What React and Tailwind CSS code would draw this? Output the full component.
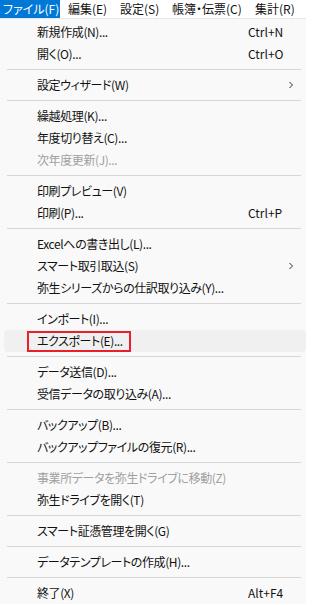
import React from "react";

// メニューバーの項目（幅は参照画像に合わせて固定）
const menubar = [
  { t: "ファイル(F)", w: "w-[60px] pl-[3px]" },
  { t: "編集(E)", w: "w-[52px] pl-[8px]" },
  { t: "設定(S)", w: "w-[52px] pl-[8px]" },
  { t: "帳簿・伝票(C)", w: "w-[83px] pl-[8px]" },
  { t: "集計(R)", w: "w-[59px] pl-[8px]" },
];

// null = 区切り線
const items = [
  { label: "新規作成(N)...", key: "Ctrl+N" },
  { label: "開く(O)...", key: "Ctrl+O" },
  null,
  { label: "設定ウィザード(W)", sub: true },
  null,
  { label: "繰越処理(K)..." },
  { label: "年度切り替え(C)..." },
  { label: "次年度更新(J)...", off: true },
  null,
  { label: "印刷プレビュー(V)" },
  { label: "印刷(P)...", key: "Ctrl+P" },
  null,
  { label: "Excelへの書き出し(L)..." },
  { label: "スマート取引取込(S)", sub: true },
  { label: "弥生シリーズからの仕訳取り込み(Y)..." },
  null,
  { label: "インポート(I)..." },
  { label: "エクスポート(E)...", hot: true },
  null,
  { label: "データ送信(D)..." },
  { label: "受信データの取り込み(A)..." },
  null,
  { label: "バックアップ(B)..." },
  { label: "バックアップファイルの復元(R)..." },
  null,
  { label: "事業所データを弥生ドライブに移動(Z)", off: true },
  { label: "弥生ドライブを開く(T)" },
  null,
  { label: "スマート証憑管理を開く(G)" },
  null,
  { label: "データテンプレートの作成(H)..." },
  null,
  { label: "終了(X)", key: "Alt+F4" },
];

function Chevron() {
  return (
    <svg width="8" height="8" viewBox="0 0 8 8" className="text-[#333]">
      <path d="M2.5 1 L5.5 4 L2.5 7" fill="none" stroke="currentColor" strokeWidth="1" />
    </svg>
  );
}

export default function App() {
  return (
    <div
      className="w-[306px] h-[605px] overflow-hidden bg-white text-[12px] leading-none text-[#111] [font-feature-settings:'palt']"
      style={{ fontFamily: '"Noto Sans CJK JP", "Noto Sans", sans-serif' }}
    >
      {/* メニューバー */}
      <div className="flex h-[18px] items-stretch bg-white whitespace-nowrap">
        {menubar.map((m, i) => (
          <div
            key={m.t}
            className={
              "flex items-center shrink-0 " +
              m.w +
              (i === 0 ? " bg-[#0078d7] text-white" : "")
            }
          >
            {m.t}
          </div>
        ))}
      </div>

      {/* ドロップダウン */}
      <div className="w-[310px] bg-[#f9f9f9] border-t border-[#e8e8e8] pt-[2px] whitespace-nowrap">
        {items.map((it, i) =>
          it === null ? (
            <div key={i} className="h-[9px] flex items-center pl-[7px] pr-[9px]">
              <div className="h-px w-full bg-[#d6d6d6]" />
            </div>
          ) : (
            <div
              key={i}
              className={
                "h-[22px] flex items-center mx-[4px] rounded-[4px] " +
                (it.hot ? "bg-[#f0f0f0]" : "")
              }
            >
              <div className="flex-1 pl-[33px] flex items-center tracking-[-0.4px]">
                {it.hot ? (
                  <span className="h-[21px] flex items-center border-2 border-[#e8202a] pl-[8px] pr-[6px] -ml-[10px]">
                    {it.label}
                  </span>
                ) : (
                  <span className={it.off ? "text-[#a0a0a0]" : ""}>{it.label}</span>
                )}
              </div>
              {it.key && <div className="w-[58px]">{it.key}</div>}
              {it.sub && (
                <div className="w-[19px]">
                  <Chevron />
                </div>
              )}
            </div>
          )
        )}
      </div>
    </div>
  );
}
